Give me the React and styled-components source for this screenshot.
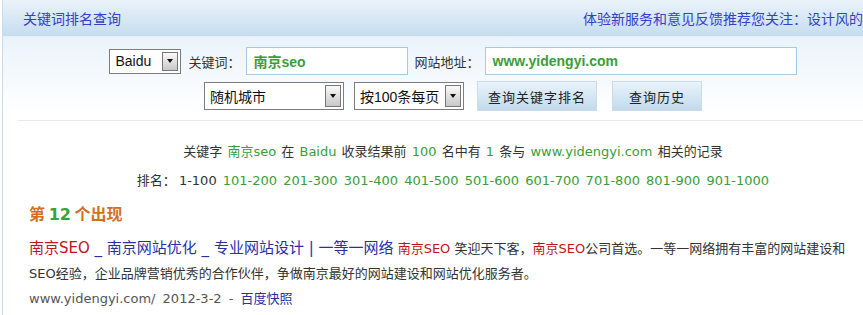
import React from "react";
import styled, { createGlobalStyle } from "styled-components";

const GlobalStyle = createGlobalStyle`
  html, body {
    margin: 0;
    padding: 0;
    overflow: hidden;
    background: #ffffff;
  }
  body {
    font-family: "DejaVu Sans", "Noto Sans CJK SC", sans-serif;
    color: #333;
  }
`;

const CJK = `"Noto Sans CJK SC", sans-serif`;
const LATIN = `"DejaVu Sans", "Noto Sans CJK SC", sans-serif`;

const Page = styled.div`
  width: 900px;
  margin-left: 2px;
  border-left: 1px solid #c9dcee;
  min-height: 315px;
`;

const Header = styled.div`
  display: flex;
  align-items: center;
  height: 36px;
  padding: 0 12px 0 20px;
  background: linear-gradient(#eaf3fb, #c5ddef);
  border-bottom: 1px solid #e4eff8;
  font-family: ${CJK};
  font-size: 14px;
  color: #3340c8;
  white-space: nowrap;
  overflow: hidden;
`;

const HeaderLinks = styled.div`
  margin-left: auto;
`;

const Form = styled.div`
  display: flex;
  flex-direction: column;
  align-items: center;
  gap: 6px;
  padding: 10px 0 9px;
  background: linear-gradient(#eaf3fb, #ffffff 90%);
`;

const Row = styled.div`
  display: flex;
  align-items: center;
  gap: ${p => p.$gap || 7}px;
`;

const Label = styled.span`
  font-family: ${CJK};
  font-size: 13px;
  color: #333;
  margin-right: -2px;
`;

const SelectBox = styled.div`
  display: flex;
  align-items: center;
  justify-content: space-between;
  box-sizing: border-box;
  width: ${p => p.$w}px;
  height: ${p => p.$h}px;
  padding: 2px 2px 2px 5px;
  border: 1px solid #7d7d7d;
  background: #fff;
  font-family: "Liberation Sans", ${CJK};
  font-size: 14px;
  color: #111;
`;

const ArrowBox = styled.span`
  display: flex;
  align-items: center;
  justify-content: center;
  box-sizing: border-box;
  width: 16px;
  height: 100%;
  border: 1px solid #777;
  background: linear-gradient(#fafafa, #c8c8c8);
  &::after {
    content: "";
    border-left: 3.5px solid transparent;
    border-right: 3.5px solid transparent;
    border-top: 4px solid #111;
  }
`;

const Input = styled.div`
  display: flex;
  align-items: center;
  box-sizing: border-box;
  width: ${p => p.$w}px;
  height: 28px;
  padding: 0 7px;
  border: 1px solid #a8cbe0;
  background: #fff;
  font-family: "Liberation Sans", ${CJK};
  font-weight: bold;
  font-size: 14px;
  color: #3a9d3a;
`;

const Button = styled.div`
  display: flex;
  align-items: center;
  justify-content: center;
  box-sizing: border-box;
  width: ${p => p.$w}px;
  height: 30px;
  margin-left: ${p => p.$ml || 0}px;
  border: 1px solid #c8dcec;
  background: linear-gradient(#e9f3fb, #c2daed);
  font-family: ${CJK};
  font-size: 13px;
  color: #222;
  letter-spacing: 1px;
`;

const Rule = styled.div`
  height: 1px;
  margin-left: 15px;
  background: #e4e9ef;
`;

const Results = styled.div`
  padding: 20px 26px 0;
`;

const Summary = styled.p`
  margin: 0 0 ${p => p.$mb || 0}px;
  text-align: center;
  line-height: 22px;
  font-family: ${LATIN};
  font-size: 13px;
  color: #333;
  white-space: nowrap;
  word-spacing: ${p => p.$ws || 0}px;
`;

const Green = styled.span`
  color: #3a9d3a;
`;

const PageLink = styled.span`
  color: ${p => (p.$current ? "#333" : "#3a9d3a")};
  margin-left: ${p => (p.$current ? 3 : 0)}px;
`;

const Found = styled.h3`
  margin: 10px 0;
  line-height: 22px;
  font-family: ${CJK};
  font-size: 16px;
  font-weight: bold;
  color: #d4701c;
`;

const Num = styled.span`
  font-family: "DejaVu Sans", sans-serif;
  color: #3aa23a;
`;

const Entry = styled.div`
  padding-right: 17px;
  line-height: 25px;
  font-family: ${LATIN};
  font-size: 13px;
  color: #333;
`;

const Title = styled.span`
  font-size: 15px;
  color: #2a2fa6;
`;

const Red = styled.span`
  color: #c0141c;
`;

const Url = styled.div`
  line-height: 26px;
  font-family: ${LATIN};
  font-size: 13px;
  color: #555;
  word-spacing: 3px;
`;

const Snapshot = styled.span`
  color: #2a2fa6;
`;

const Select = ({ w, h, children }) => (
  <SelectBox $w={w} $h={h}>
    <span>{children}</span>
    <ArrowBox />
  </SelectBox>
);

const pages = ["101-200", "201-300", "301-400", "401-500", "501-600", "601-700", "701-800", "801-900", "901-1000"];

export default function App() {
  return (
    <>
      <GlobalStyle />
      <Page>
        <Header>
          <span>关键词排名查询</span>
          <HeaderLinks>体验新服务和意见反馈推荐您关注：设计风的网站</HeaderLinks>
        </Header>
        <Form>
          <Row>
            <Select w={72} h={25}>Baidu</Select>
            <Label>关键词：</Label>
            <Input $w={162}>南京seo</Input>
            <Label>网站地址：</Label>
            <Input $w={312}>www.yidengyi.com</Input>
          </Row>
          <Row $gap={10}>
            <Select w={140} h={28}>随机城市</Select>
            <Select w={110} h={28}>按100条每页</Select>
            <Button $w={120} $ml={3}>查询关键字排名</Button>
            <Button $w={90} $ml={5}>查询历史</Button>
          </Row>
        </Form>
        <Rule />
        <Results>
          <Summary $mb={7} $ws={1}>
            关键字 <Green>南京seo</Green> 在 <Green>Baidu</Green> 收录结果前 <Green>100</Green> 名中有{" "}
            <Green>1</Green> 条与 <Green>www.yidengyi.com</Green> 相关的记录
          </Summary>
          <Summary $ws={2}>
            排名：<PageLink $current>1-100</PageLink>
            {pages.map(p => (
              <React.Fragment key={p}>
                {" "}
                <PageLink>{p}</PageLink>
              </React.Fragment>
            ))}
          </Summary>
          <Found>
            第 <Num>12</Num> 个出现
          </Found>
          <Entry>
            <Title>
              <Red>南京SEO</Red> _ 南京网站优化 _ 专业网站设计 | 一等一网络
            </Title>{" "}
            <Red>南京SEO</Red> 笑迎天下客，<Red>南京SEO</Red>公司首选。一等一网络拥有丰富的网站建设和SEO经验，企业品牌营销优秀的合作伙伴，争做南京最好的网站建设和网站优化服务者。
          </Entry>
          <Url>
            www.yidengyi.com/ 2012-3-2 - <Snapshot>百度快照</Snapshot>
          </Url>
        </Results>
      </Page>
    </>
  );
}
